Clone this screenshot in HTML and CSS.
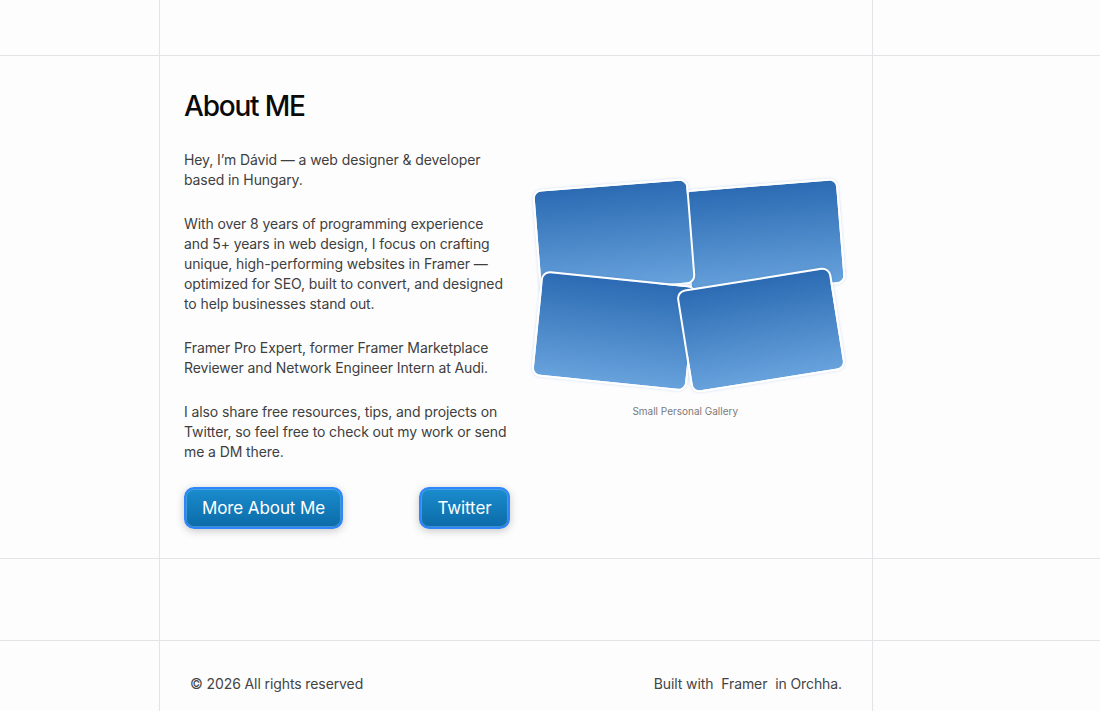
FILE: index.html
```html
<!DOCTYPE html>
<html lang="en">
    <head>
        <meta charset="UTF-8" />
        <meta name="viewport" content="width=device-width, initial-scale=1.0" />
        <title>About Me</title>
        <link rel="stylesheet" href="styles.css">
    </head>
    <body>
        <div class="band bandTop">
            <div class="col"></div>
        </div>
        <section class="band about">
            <div class="col aboutCol">
                <h2 class="title">About ME</h2>
                <div class="aboutBody">
                    <div class="text">
                        <p>Hey, I’m Dávid — a web designer &amp; developer based in Hungary.</p>
                        <p>With over 8 years of programming experience and 5+ years in web design, I focus on crafting unique, high-performing websites in Framer — optimized for SEO, built to convert, and designed to help businesses stand out.</p>
                        <p>Framer Pro Expert, former Framer Marketplace Reviewer and Network Engineer Intern at Audi.</p>
                        <p>I also share free resources, tips, and projects on Twitter, so feel free to check out my work or send me a DM there.</p>
                        <div class="buttons">
                            <a class="btn" href="#">More About Me</a>
                            <a class="btn" href="#">Twitter</a>
                        </div>
                    </div>
                    <div class="gallery">
                        <div class="tiles">
                            <div class="tile t2"></div>
                            <div class="tile t1"></div>
                            <div class="tile t3"></div>
                            <div class="tile t4"></div>
                        </div>
                        <div class="caption">Small Personal Gallery</div>
                    </div>
                </div>
            </div>
        </section>
        <div class="band bandMid">
            <div class="col"></div>
        </div>
        <footer class="band footer">
            <div class="col footerCol">
                <span>© 2026 All rights reserved</span>
                <span>Built with <span class="framer">Framer</span> in Orchha.</span>
            </div>
        </footer>
    </body>
</html>
```

FILE: styles.css
```css
body {
    margin: 0;
    background-color: #fdfdfe;
    font-family: Inter, "Noto Sans", sans-serif;
    color: #3f3f3f;
    overflow: hidden;
}
.band {
    border-bottom: 1px solid #e4e3e8;
}
.col {
    box-sizing: border-box;
    margin-left: 159px;
    width: 714px;
    height: 100%;
    border-left: 1px solid #e4e3e8;
    border-right: 1px solid #e4e3e8;
}
.bandTop {
    height: 55px;
}
.about {
    height: 502px;
}
.aboutCol {
    padding: 31px 24px 0 24px;
}
.title {
    margin: 0;
    font-size: 28px;
    line-height: 38px;
    font-weight: 500;
    letter-spacing: -1.2px;
    color: #0a0a0a;
}
.aboutBody {
    display: flex;
    margin-top: 25px;
}
.text {
    width: 326px;
    font-size: 14px;
    line-height: 20px;
    letter-spacing: -0.1px;
}
.text p {
    margin: 0 0 24px 0;
}
.buttons {
    display: flex;
    justify-content: space-between;
    margin-top: 25px;
}
.btn {
    box-sizing: border-box;
    height: 42px;
    padding: 0 16px;
    display: flex;
    align-items: center;
    border: 2px solid #2f86fa;
    border-radius: 10px;
    background: linear-gradient(#1a8ccd, #0c6ba8);
    box-shadow: inset 0 0 0 1px rgba(120, 190, 255, 0.45), 0 2px 8px rgba(0, 0, 0, 0.22);
    color: #ffffff;
    font-size: 17px;
    letter-spacing: -0.1px;
    text-decoration: none;
}
.gallery {
    margin-left: 13px;
    margin-top: 20px;
    width: 326px;
}
.tiles {
    position: relative;
    height: 232px;
}
.tile {
    position: absolute;
    box-sizing: border-box;
    width: 156px;
    height: 106px;
    border: 2px solid #ffffff;
    border-radius: 9px;
    background: linear-gradient(#2c6bb3, #67a2dc);
    box-shadow: 0 0 3px rgba(60, 110, 180, 0.25);
}
.t1 {
    left: 13px;
    top: 14px;
    transform: rotate(-4.5deg);
}
.t2 {
    left: 163px;
    top: 14px;
    transform: rotate(-4.6deg);
}
.t3 {
    left: 13px;
    top: 108px;
    transform: rotate(5.8deg);
}
.t4 {
    left: 160px;
    top: 108px;
    height: 104px;
    transform: rotate(-9deg);
}
.caption {
    margin-top: 3px;
    text-align: center;
    font-size: 10px;
    color: #7a7a7a;
}
.bandMid {
    height: 81px;
}
.footer {
    height: 70px;
    border-bottom: none;
}
.footerCol {
    display: flex;
    justify-content: space-between;
    padding: 34px 30px 0 30px;
    font-size: 14px;
    letter-spacing: -0.1px;
    color: #444444;
}
.framer {
    margin: 0 4px;
}
```
